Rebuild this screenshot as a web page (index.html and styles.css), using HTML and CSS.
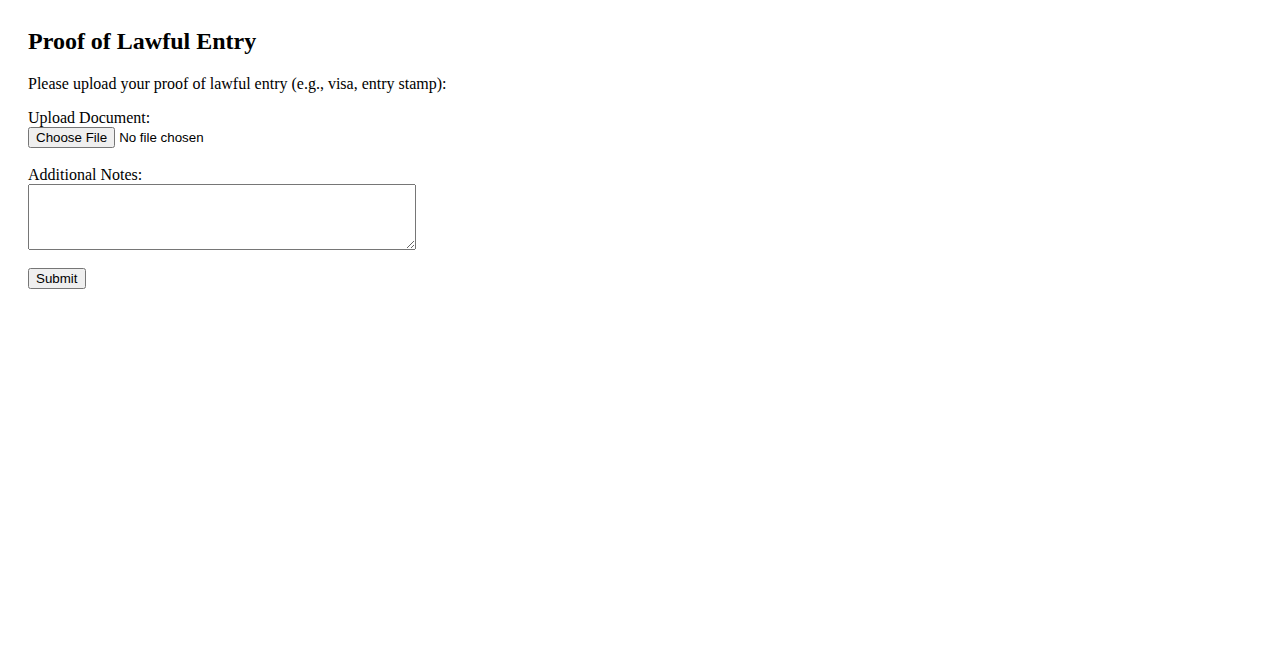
FILE: index.html
```html
<!DOCTYPE html>
<html lang="en">

<head>
    <meta charset="UTF-8">
    <meta name="viewport" content="width=device-width, initial-scale=1.0">
    <title>Proof of Lawful Entry</title>
    <link rel="stylesheet" href="styles.css">
</head>

<body>
    <div class="container">
        <h2>Proof of Lawful Entry</h2>
        <p class="intro">Please upload your proof of lawful entry (e.g., visa, entry stamp):</p>

        <form id="entryForm">
            <div class="form-group">
                <label for="document">Upload Document:</label>
                <input type="file" id="document" name="document">
            </div>

            <div class="form-group">
                <label for="notes">Additional Notes:</label>
                <textarea id="notes" name="notes" rows="4"></textarea>
            </div>

            <button type="submit" class="btn">Submit</button>
        </form>
    </div>
</body>

</html>
```

FILE: styles.css
```css
body {
    margin: 0;
    padding: 28px;
    font-family: 'Liberation Serif', 'Times New Roman', serif;
    font-size: 16px;
    color: #000;
    background-color: #fff;
}

h2 {
    margin: 0 0 0.83em 0;
    font-size: 24px;
    font-weight: 700;
}

.intro {
    margin: 0 0 16px 0;
}

.form-group {
    margin-bottom: 18px;
}

label {
    display: block;
}

input[type="file"],
.btn {
    font-family: 'Liberation Sans', Arial, sans-serif;
    font-size: 13.33px;
}

.btn {
    padding: 1px 7px 1px 6px;
}

textarea {
    display: block;
    box-sizing: border-box;
    width: 388px;
    height: 66px;
    font-family: 'Liberation Mono', monospace;
}
```
